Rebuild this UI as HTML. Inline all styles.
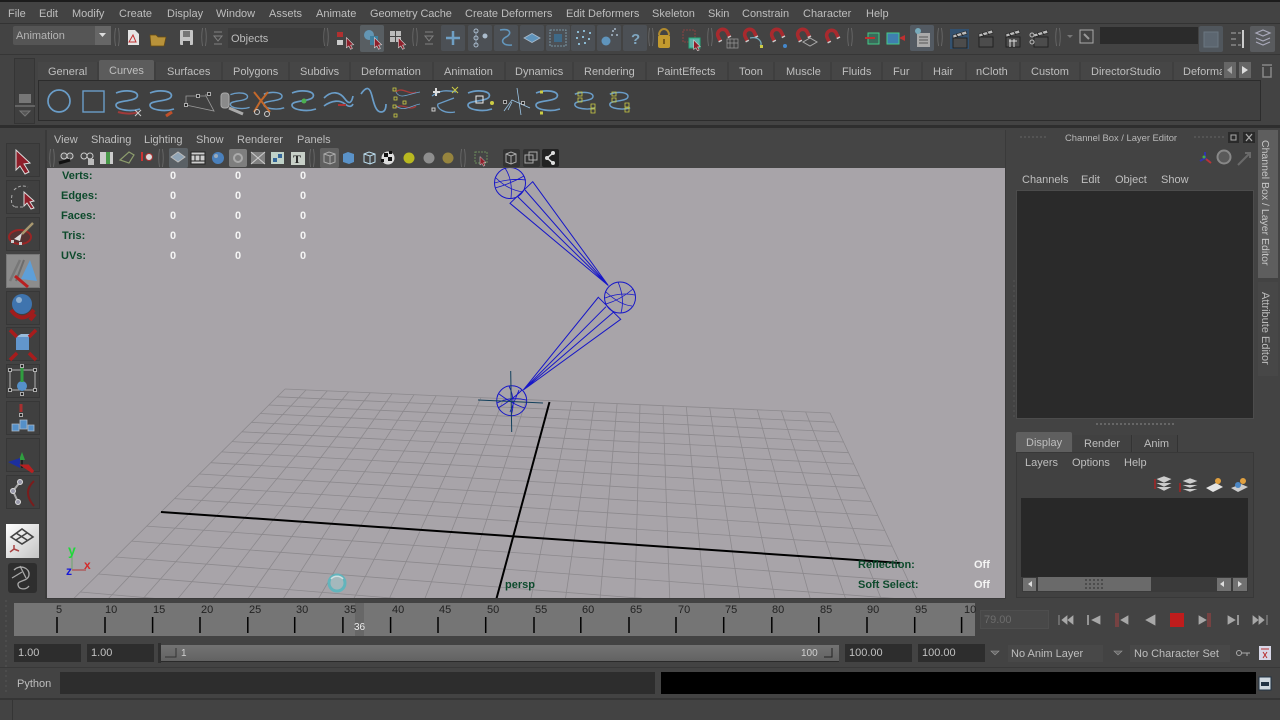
<!DOCTYPE html>
<html><head><meta charset="utf-8"><title>Maya</title>
<style>
html,body{margin:0;padding:0;background:#434343;}
body{width:1280px;height:720px;position:relative;overflow:hidden;font:11px/14px "Liberation Sans",Arial,sans-serif;color:#bebebe;}
.t{position:absolute;white-space:nowrap;margin-top:1px;}
.b{position:absolute;box-sizing:border-box;}
.h{position:absolute;white-space:nowrap;font-weight:bold;color:#0d4a2c;margin-top:1px;}
.o{position:absolute;white-space:nowrap;font-weight:bold;color:#f4f4f4;margin-top:1px;}
.f{position:absolute;box-sizing:border-box;background:#2d2d2d;height:18px;color:#c0c0c0;line-height:19px;padding-left:4px;}
.tb{position:absolute;box-sizing:border-box;left:6px;width:34px;height:34px;background:#404040;border:1px solid #373737;}
svg.o1{position:absolute;left:0;top:0;}
</style></head><body>
<!-- panel backgrounds -->
<div class="b" style="left:0;top:0;width:1280px;height:2px;background:#1c1c1c"></div>
<div class="b" style="left:0;top:23px;width:1280px;height:1px;background:#333"></div>
<div class="b" style="left:0;top:54px;width:1280px;height:1px;background:#363636"></div>
<div class="b" style="left:0;top:125px;width:1280px;height:3px;background:#2e2e2e"></div>

<!-- menu -->
<span class="t" style="left:8px;top:6px">File</span><span class="t" style="left:39px;top:6px">Edit</span><span class="t" style="left:72px;top:6px">Modify</span><span class="t" style="left:119px;top:6px">Create</span><span class="t" style="left:167px;top:6px">Display</span><span class="t" style="left:216px;top:6px">Window</span><span class="t" style="left:269px;top:6px">Assets</span><span class="t" style="left:316px;top:6px">Animate</span><span class="t" style="left:370px;top:6px;letter-spacing:-.1px">Geometry Cache</span><span class="t" style="left:465px;top:6px">Create Deformers</span><span class="t" style="left:566px;top:6px">Edit Deformers</span><span class="t" style="left:652px;top:6px">Skeleton</span><span class="t" style="left:708px;top:6px">Skin</span><span class="t" style="left:742px;top:6px">Constrain</span><span class="t" style="left:803px;top:6px">Character</span><span class="t" style="left:866px;top:6px">Help</span>

<!-- status line -->
<div class="b" style="left:13px;top:26px;width:98px;height:19px;background:#555;border-radius:2px"></div>
<div class="b" style="left:95px;top:26px;width:16px;height:19px;background:#666"></div>
<span class="t" style="left:16px;top:28px;color:#b4b4b4">Animation</span>
<div class="b" style="left:228px;top:28px;width:97px;height:20px;background:#3c3c3c"></div>
<span class="t" style="left:231px;top:31px;color:#bcbcbc">Objects</span>
<div class="b" style="left:1100px;top:27px;width:98px;height:17px;background:#2b2b2b"></div>

<!-- shelf tabs -->
<div class="b" style="left:38px;top:62px;width:1190px;height:18px;background:#464646"></div>
<div class="b" style="left:99px;top:60px;width:55px;height:20px;background:#5c5c5c;border-radius:2px 2px 0 0"></div>
<span class="t" style="left:48px;top:64px">General</span><span class="t" style="left:109px;top:63px">Curves</span><span class="t" style="left:167px;top:64px">Surfaces</span><span class="t" style="left:233px;top:64px">Polygons</span><span class="t" style="left:300px;top:64px">Subdivs</span><span class="t" style="left:361px;top:64px">Deformation</span><span class="t" style="left:444px;top:64px">Animation</span><span class="t" style="left:515px;top:64px">Dynamics</span><span class="t" style="left:584px;top:64px">Rendering</span><span class="t" style="left:657px;top:64px">PaintEffects</span><span class="t" style="left:739px;top:64px">Toon</span><span class="t" style="left:786px;top:64px">Muscle</span><span class="t" style="left:842px;top:64px">Fluids</span><span class="t" style="left:893px;top:64px">Fur</span><span class="t" style="left:933px;top:64px">Hair</span><span class="t" style="left:976px;top:64px">nCloth</span><span class="t" style="left:1031px;top:64px">Custom</span><span class="t" style="left:1091px;top:64px">DirectorStudio</span>
<div class="b" style="left:1183px;top:62px;width:39px;height:18px;overflow:hidden"><span class="t" style="left:0;top:2px">Deformation</span></div>
<div class="b" style="left:38px;top:80px;width:1223px;height:41px;background:#404040;border:1px solid #2c2c2c"></div>
<div class="b" style="left:14px;top:58px;width:21px;height:66px;background:#3f3f3f;border:1px solid #353535"></div>
<div class="b" style="left:1224px;top:62px;width:12px;height:16px;background:#666"></div>
<div class="b" style="left:1239px;top:62px;width:12px;height:16px;background:#666"></div>

<!-- viewport panel -->
<div class="b" style="left:45px;top:130px;width:961px;height:469px;background:#3a3a3a"></div>
<div class="b" style="left:47px;top:130px;width:958px;height:38px;background:#454545"></div>
<div class="b" style="left:47px;top:168px;width:958px;height:430px;background:#a8a4a9"></div>
<span class="t" style="left:54px;top:132px">View</span><span class="t" style="left:91px;top:132px">Shading</span><span class="t" style="left:144px;top:132px">Lighting</span><span class="t" style="left:196px;top:132px">Show</span><span class="t" style="left:237px;top:132px">Renderer</span><span class="t" style="left:297px;top:132px">Panels</span>

<!-- toolbox -->
<div class="tb" style="top:143px"></div><div class="tb" style="top:180px"></div><div class="tb" style="top:217px"></div>
<div class="tb" style="top:254px;background:#8c8c8c;border-color:#777"></div>
<div class="tb" style="top:291px"></div><div class="tb" style="top:327px"></div><div class="tb" style="top:364px"></div><div class="tb" style="top:401px"></div><div class="tb" style="top:438px"></div><div class="tb" style="top:475px"></div>
<div class="b" style="left:6px;top:524px;width:33px;height:34px;background:linear-gradient(135deg,#fff,#c4c4c4)"></div>
<div class="b" style="left:8px;top:563px;width:29px;height:30px;background:#2e2e2e;border-radius:3px"></div>

<!-- right panel -->
<span class="t" style="left:1065px;top:130px;font-size:9.4px;color:#b8b8b8">Channel Box / Layer Editor</span>
<span class="t" style="left:1022px;top:172px">Channels</span><span class="t" style="left:1081px;top:172px">Edit</span><span class="t" style="left:1115px;top:172px">Object</span><span class="t" style="left:1161px;top:172px">Show</span>
<div class="b" style="left:1016px;top:190px;width:238px;height:229px;background:#2a2a2a;border:1px solid #4c4c4c"></div>
<div class="b" style="left:1016px;top:452px;width:238px;height:146px;background:#414141;border:1px solid #383838"></div>
<div class="b" style="left:1016px;top:432px;width:56px;height:20px;background:#5f5f5f;border-radius:2px 2px 0 0"></div>
<div class="b" style="left:1073px;top:435px;width:59px;height:17px;background:#414141;border-right:1px solid #333"></div>
<div class="b" style="left:1133px;top:435px;width:45px;height:17px;background:#414141;border-right:1px solid #333"></div>
<span class="t" style="left:1026px;top:435px">Display</span><span class="t" style="left:1084px;top:436px">Render</span><span class="t" style="left:1144px;top:436px">Anim</span>
<span class="t" style="left:1025px;top:455px">Layers</span><span class="t" style="left:1072px;top:455px">Options</span><span class="t" style="left:1124px;top:455px">Help</span>
<div class="b" style="left:1021px;top:498px;width:227px;height:79px;background:#282828"></div>
<div class="b" style="left:1022px;top:577px;width:226px;height:15px;background:#3a3a3a"></div>
<div class="b" style="left:1023px;top:578px;width:13px;height:13px;background:#717171"></div>
<div class="b" style="left:1038px;top:577px;width:113px;height:14px;background:#6a6a6a"></div>
<div class="b" style="left:1217px;top:578px;width:14px;height:13px;background:#717171"></div>
<div class="b" style="left:1233px;top:578px;width:14px;height:13px;background:#717171"></div>
<div class="b" style="left:1258px;top:130px;width:20px;height:148px;background:#5e5e5e"></div>
<div class="b" style="left:1258px;top:282px;width:20px;height:94px;background:#474747"></div>
<span class="t" style="left:1258px;top:139px;writing-mode:vertical-rl;color:#c8c8c8;font-size:10.5px">Channel Box / Layer Editor</span>
<span class="t" style="left:1258px;top:291px;writing-mode:vertical-rl;color:#bcbcbc">Attribute Editor</span>

<!-- time slider -->
<div class="b" style="left:14px;top:603px;width:961px;height:33px;background:#757575"></div>
<div class="b" style="left:355px;top:603px;width:9px;height:33px;background:#676767"></div>
<span class="t" style="left:56px;top:602px;color:#222">5</span><span class="t" style="left:105px;top:602px;color:#222">10</span><span class="t" style="left:153px;top:602px;color:#222">15</span><span class="t" style="left:201px;top:602px;color:#222">20</span><span class="t" style="left:249px;top:602px;color:#222">25</span><span class="t" style="left:296px;top:602px;color:#222">30</span><span class="t" style="left:344px;top:602px;color:#222">35</span><span class="t" style="left:392px;top:602px;color:#222">40</span><span class="t" style="left:439px;top:602px;color:#222">45</span><span class="t" style="left:487px;top:602px;color:#222">50</span><span class="t" style="left:535px;top:602px;color:#222">55</span><span class="t" style="left:582px;top:602px;color:#222">60</span><span class="t" style="left:630px;top:602px;color:#222">65</span><span class="t" style="left:678px;top:602px;color:#222">70</span><span class="t" style="left:725px;top:602px;color:#222">75</span><span class="t" style="left:772px;top:602px;color:#222">80</span><span class="t" style="left:820px;top:602px;color:#222">85</span><span class="t" style="left:867px;top:602px;color:#222">90</span><span class="t" style="left:915px;top:602px;color:#222">95</span><span class="t" style="left:964px;top:602px;color:#222">10</span>
<span class="t" style="left:354px;top:620px;color:#eee;font-size:10px">36</span>
<div class="b" style="left:980px;top:610px;width:69px;height:19px;background:#484848;border:1px solid #4e4e4e"></div>
<span class="t" style="left:984px;top:612px;color:#6c6c6c">79.00</span>

<!-- range -->
<div class="f" style="left:14px;top:644px;width:67px">1.00</div>
<div class="f" style="left:87px;top:644px;width:67px">1.00</div>
<div class="b" style="left:158px;top:643px;width:3px;height:20px;background:#2f2f2f"></div>
<div class="b" style="left:161px;top:645px;width:678px;height:17px;background:linear-gradient(#737373,#626262);border-bottom:1px solid #2a2a2a"></div>
<span class="t" style="left:181px;top:646px;color:#d0d0d0;font-size:10px">1</span>
<span class="t" style="left:801px;top:646px;color:#d0d0d0;font-size:10px">100</span>
<div class="f" style="left:845px;top:644px;width:67px">100.00</div>
<div class="f" style="left:918px;top:644px;width:67px">100.00</div>
<div class="b" style="left:1008px;top:645px;width:95px;height:17px;background:#484848"></div>
<span class="t" style="left:1011px;top:646px">No Anim Layer</span>
<div class="b" style="left:1130px;top:645px;width:100px;height:17px;background:#484848"></div>
<span class="t" style="left:1134px;top:646px">No Character Set</span>

<!-- command line -->
<div class="b" style="left:0;top:667px;width:1280px;height:1px;background:#383838"></div>
<span class="t" style="left:17px;top:676px">Python</span>
<div class="b" style="left:60px;top:672px;width:595px;height:22px;background:#2d2d2d"></div>
<div class="b" style="left:661px;top:672px;width:595px;height:22px;background:#000"></div>
<div class="b" style="left:0;top:698px;width:1280px;height:2px;background:#353535"></div>
<div class="b" style="left:12px;top:700px;width:1px;height:20px;background:#353535"></div>

<svg class="o1" width="1280" height="720" viewBox="0 0 1280 720" fill="none">
<defs>
<clipPath id="vp"><rect x="47" y="168" width="958" height="430"/></clipPath>
<path id="sc" d="M-12,-8C-2,-12 12,-10 9,-4C6,1 -12,-1 -12,4C-12,9 3,11 12,8"/>
<g id="mag"><path d="M-7,6V-1A7,7 0 0 1 7,-1V6" stroke="#a82a2e" stroke-width="5"/><path d="M-9.500,6h5M4.500,6h5" stroke="#ccc" stroke-width="2"/></g>
<g id="clap"><rect x="-7" y="-2" width="14" height="10" fill="#4c4c4c" stroke="#222"/><path d="M-7,-5L6,-9l1,3 -14,4z" fill="#bbb" stroke="#222" stroke-width=".6"/><path d="M-4,-6l2,3M1,-7l2,3" stroke="#222"/></g>
<g id="btn"><rect x="-12" y="-13" width="24" height="26" rx="2" fill="#4c5055"/></g>
<path id="arr" d="M-6,-9L6,3 1,3.500 4,9 1,10.500 -2,5 -6,8z" fill="#8e1f2a" stroke="#d8d8d8" stroke-width="1"/>
<g id="sep"><path d="M-1.500,-9Q-3,0 -1.500,9M1.500,-9Q3,0 1.500,9" stroke="#6c6c6c" stroke-width=".8"/></g>
<g id="tri"><path d="M-4,-6h8M-4,6h8M-4,-2h8l-4,5z" stroke="#808080" stroke-width="1"/></g>
<rect id="pt" x="-1.500" y="-1.500" width="3" height="3" fill="#222" stroke="#ddd" stroke-width=".7"/>
</defs>

<!-- dropdown arrow -->
<path d="M99,33h7l-3.500,4z" fill="#ddd"/>
<!-- tab dividers -->
<path d="M98,62V80M155,62V80M222,62V80M289,62V80M350,62V80M433,62V80M505,62V80M573,62V80M646,62V80M728,62V80M774,62V80M831,62V80M882,62V80M922,62V80M966,62V80M1020,62V80M1080,62V80M1173,62V80" stroke="#383838"/>

<!-- status icons -->
<use href="#sep" x="117" y="37"/><use href="#sep" x="204" y="37"/><use href="#tri" x="218" y="38"/><use href="#sep" x="326" y="37"/><use href="#sep" x="415" y="37"/><use href="#tri" x="429" y="38"/><use href="#sep" x="651" y="37"/><use href="#sep" x="710" y="37"/><use href="#sep" x="850" y="37"/><use href="#sep" x="940" y="37"/><use href="#sep" x="1058" y="37"/>
<path d="M128,30h7l4,4v11h-11z" fill="#e4e4e4"/><path d="M129,42l4,-7 3,7z" stroke="#c03030"/>
<path d="M150,35h6l2,2h8l-2,9h-13z" fill="#b8923a" stroke="#6a4d12" stroke-width=".7"/>
<rect x="180" y="30" width="13" height="15" rx="1" fill="#c4c4c4"/><rect x="183" y="31" width="7" height="6" fill="#777"/><rect x="183" y="41" width="7" height="4" fill="#444"/>
<rect x="337" y="32" width="6" height="5" fill="#b03030"/><rect x="337" y="40" width="6" height="5" fill="#ccc"/><use href="#arr" transform="translate(350,43) scale(.6)"/>
<rect x="360" y="25" width="24" height="27" rx="2" fill="#585e62"/><circle cx="369" cy="35" r="5" fill="#6396b4"/><rect x="370" y="36" width="8" height="9" fill="#3f7f9f"/><use href="#arr" transform="translate(378,43) scale(.6)"/>
<path d="M390,31h5v5h-5zM396,31h5v5h-5zM390,37h5v5h-5zM396,37h5v5h-5z" fill="#bbb"/><use href="#arr" transform="translate(402,43) scale(.6)"/>
<g transform="translate(453,38)"><use href="#btn"/><path d="M0,-7V7M-7,0H7" stroke="#6f9fc4" stroke-width="2.500"/></g>
<g transform="translate(480,38)"><use href="#btn"/><path d="M-4,-7V7" stroke="#789" stroke-width="1"/><circle cx="-4" cy="-7" r="2" stroke="#abc"/><circle cx="-4" cy="0" r="2" stroke="#abc"/><circle cx="-4" cy="7" r="2" stroke="#abc"/><circle cx="5" cy="-2" r="2.500" fill="#abc"/></g>
<g transform="translate(506,38)"><use href="#btn"/><path d="M-6,-8C5,-10 6,-4 0,-1S-4,8 6,7" stroke="#6396bc" stroke-width="1.600"/></g>
<g transform="translate(532,38)"><use href="#btn"/><path d="M-8,0L0,-4.500 8,0 0,4.500z" fill="#5f94bc" stroke="#abc" stroke-width=".8"/></g>
<g transform="translate(558,38)"><use href="#btn"/><rect x="-8" y="-8" width="16" height="16" stroke="#8ab" stroke-dasharray="2 1" stroke-width=".8"/><path d="M-4,-4h8v8h-8z" fill="#3f6a88"/></g>
<g transform="translate(583,38)"><use href="#btn"/><path d="M-6,-6h2M0,-7h2M6,-5h2M-7,0h2M-1,-1h2M5,1h2M-5,6h2M1,5h2" stroke="#8ab8d0" stroke-width="2"/></g>
<g transform="translate(609,38)"><use href="#btn"/><circle cx="-3" cy="3" r="4.500" fill="#5f94bc"/><path d="M3,-7h2M7,-3h2M5,-9h2M2,-3h2" stroke="#abc" stroke-width="1.600"/></g>
<g transform="translate(635,38)"><use href="#btn"/><text x="-4" y="6" font-size="15" font-family="Liberation Sans" font-weight="bold" fill="#7fa6c0">?</text></g>
<path d="M659,35a5,6 0 0 1 10,0" stroke="#b08a2e" stroke-width="2"/><rect x="658" y="35" width="12" height="13" rx="2" fill="#c39a2e"/><rect x="663" y="39" width="2" height="5" fill="#7a5a1a"/>
<rect x="683" y="30" width="12" height="12" stroke="#a04040" stroke-dasharray="2 1" stroke-width=".8"/><rect x="689" y="38" width="11" height="10" fill="#5fb0a8" stroke="#2a7"/><use href="#arr" transform="translate(697,45) scale(.55)"/>
<use href="#mag" transform="translate(723,35) rotate(-25) scale(.72)"/><path d="M727,39h11v9h-11zM730,39v9M734,39v9M727,43h11" stroke="#999" stroke-width=".7"/>
<use href="#mag" transform="translate(750,35) rotate(-25) scale(.72)"/><path d="M750,38C760,36 763,44 760,46" stroke="#7ab" stroke-width="1.300"/><rect x="760" y="45" width="3" height="3" fill="#cc4"/>
<use href="#mag" transform="translate(777,35) rotate(-25) scale(.72)"/><circle cx="785" cy="46" r="2" fill="#48c"/>
<use href="#mag" transform="translate(803,35) rotate(-25) scale(.72)"/><path d="M803,42l7,-4 7,4 -7,4z" stroke="#aaa"/>
<use href="#mag" transform="translate(832,36) rotate(-25) scale(.72)"/>
<rect x="868" y="33" width="11" height="11" fill="#3a6a5a" stroke="#4c8"/><path d="M865,38h10" stroke="#c03030" stroke-width="2"/>
<rect x="887" y="33" width="12" height="11" fill="#3f7faf" stroke="#4c8"/><path d="M899,38l6,-3v6z" fill="#c03030"/>
<rect x="910" y="25" width="24" height="26" rx="2" fill="#535a62"/><rect x="917" y="33" width="13" height="14" fill="#aaa"/><path d="M919,37h9M919,40h9M919,43h9" stroke="#555"/><circle cx="918" cy="31" r="3" fill="#7ab"/>
<rect x="950" y="29" width="19" height="20" fill="#33516f"/><use href="#clap" x="960" y="40"/>
<use href="#clap" x="986" y="39"/><use href="#clap" x="1013" y="39"/><path d="M1009,41h8M1010,39v8M1014,39v8" stroke="#ddd"/><use href="#clap" x="1041" y="39"/><circle cx="1032" cy="35" r="2" stroke="#bbb"/><circle cx="1032" cy="42" r="2" stroke="#bbb"/>
<path d="M1067,35h6l-3,3z" fill="#777"/><rect x="1080" y="30" width="13" height="13" stroke="#aaa"/><path d="M1084,34l5,5" stroke="#999" stroke-width="2"/>
<rect x="1199" y="26" width="24" height="26" rx="2" fill="#50565c"/><rect x="1204" y="32" width="14" height="15" stroke="#6a7580" fill="#5c6670"/>
<path d="M1231,33h5M1231,39h5M1231,45h5M1238,33h3M1238,45h3" stroke="#aaa"/><path d="M1243,30v18" stroke="#ccc" stroke-width="2"/>
<rect x="1250" y="26" width="25" height="26" rx="2" fill="#595b5e"/><path d="M1256,33l7,-3 7,3 -7,3zM1256,38l7,3 7,-3M1256,42l7,3 7,-3" stroke="#aab" stroke-width="1.200"/>

<!-- shelf left -->
<rect x="19" y="94" width="12" height="9" fill="#777"/><path d="M15,106h20" stroke="#888"/><path d="M20,111h10l-5,5z" stroke="#777" fill="#555"/>
<!-- tab arrows/trash -->
<path d="M1232,66v8l-5,-4z" fill="#aaa"/><path d="M1242,66v8l6,-4z" fill="#ddd"/>
<path d="M1262,65h10M1263,67v10h8v-10" stroke="#888" stroke-width="1.500"/>

<!-- shelf icons -->
<g stroke="#6a9dc8" stroke-width="1.700">
<circle cx="59" cy="101" r="11"/><rect x="83" y="91" width="21" height="21" stroke-width="1.400"/>
<g transform="translate(128,101)"><use href="#sc"/></g>
<g transform="translate(162,101)"><use href="#sc"/></g>
<g transform="translate(234,101)"><use href="#sc" transform="translate(6,0) scale(.8)"/></g>
<g transform="translate(270,101)"><use href="#sc" transform="translate(4,0) scale(.85)"/></g>
<g transform="translate(304,101)"><use href="#sc"/></g>
<path d="M324,98C332,90 340,92 345,99S352,101 353,96M324,106C332,100 340,100 345,104S352,106 353,104"/>
<path d="M361,94C367,85 370,88 372,96S376,112 381,112 386,106 386,104"/>
<g transform="translate(480,101)"><use href="#sc"/></g>
<g transform="translate(548,101)"><use href="#sc"/></g>
<g transform="translate(585,101)"><use href="#sc" transform="scale(.85)"/></g>
<g transform="translate(620,101)"><use href="#sc" transform="scale(.85)"/></g>
</g>
<path d="M118,112C128,115 136,113 138,112" stroke="#a03a3a" stroke-width="2"/><path d="M135,110l6,6M141,110l-6,6" stroke="#ccc"/>
<path d="M172,112l-6,4" stroke="#c0502a" stroke-width="3"/>
<path d="M186,105V96h20M206,96v-2M186,105l28,6-8,-15" stroke="#999" stroke-width=".8"/><use href="#pt" x="186" y="105"/><use href="#pt" x="198" y="96"/><use href="#pt" x="209" y="94"/>
<rect x="221" y="93" width="8" height="15" rx="3" fill="#8a8a8a" stroke="#aaa"/><path d="M229,108l14,6" stroke="#aaa" stroke-width="3"/>
<path d="M254,92l8,10 8,10M268,92l-8,10-6,10" stroke="#c4682a" stroke-width="2"/><circle cx="257" cy="112" r="2.500" stroke="#ccc"/><circle cx="267" cy="114" r="2.500" stroke="#ccc"/>
<circle cx="304" cy="101" r="2.500" fill="#4caf50"/><path d="M338,105h8" stroke="#a33" stroke-width="2"/>
<path d="M396,92C402,86 410,96 416,92M396,108C402,102 410,112 416,106" stroke="#a83a3a" stroke-width="1.300"/><path d="M396,92C400,100 408,94 420,92M396,106C404,112 410,106 420,104" stroke="#6ea3cf" stroke-width=".8"/>
<g stroke="#cc4" stroke-width=".8"><rect x="393" y="88" width="3" height="3"/><rect x="394" y="97" width="3" height="3"/><rect x="393" y="105" width="3" height="3"/><rect x="394" y="114" width="3" height="3"/><rect x="403" y="101" width="3" height="3"/></g>
<path d="M432,96C440,90 446,90 456,92M454,98L438,104C436,108 444,114 455,112" stroke="#6a9dc8" stroke-width="1.300"/><path d="M433,92h7M436,88v8" stroke="#ddd" stroke-width="2"/><path d="M452,87l6,6M458,87l-6,6" stroke="#cc4"/><rect x="432" y="108" width="3" height="3" stroke="#ccc"/>
<rect x="476" y="96" width="7" height="7" stroke="#eee"/><circle cx="492" cy="103" r="2" fill="#cc4"/>
<path d="M504,111L512,100 530,108M517,88L521,115M512,102L508,110" stroke="#9cc7e8" stroke-width=".8"/><use href="#pt" x="505" y="102"/><use href="#pt" x="523" y="103"/>
<path d="M540,92h3M540,113h3" stroke="#cc4" stroke-width="3"/><path d="M578,92h4v4h-4zM578,98h4v4h-4zM591,104h4v4h-4zM591,109h4v4h-4z" stroke="#cc4" stroke-width=".8"/><path d="M612,92h4v4h-4zM612,98h4v4h-4zM625,103h4v4h-4zM625,108h4v4h-4z" stroke="#cc4" stroke-width=".8"/>

<!-- viewport toolbar -->
<use href="#sep" x="52" y="158"/><use href="#sep" x="161" y="158"/><use href="#sep" x="312" y="158"/><use href="#sep" x="463" y="158"/>
<circle cx="64" cy="156" r="3" stroke="#ccc" fill="#555"/><circle cx="70" cy="156" r="3" stroke="#ccc" fill="#555"/><path d="M59,163l11,-3" stroke="#111" stroke-width="3"/>
<circle cx="84" cy="156" r="3" stroke="#ccc"/><circle cx="90" cy="156" r="3" stroke="#ccc"/><rect x="88" y="159" width="6" height="6" fill="#bbb"/>
<rect x="100" y="152" width="13" height="12" fill="#ccc"/><rect x="106" y="152" width="4" height="12" fill="#4a9a4a"/>
<path d="M120,160l9,-8 5,3 -5,8z" stroke="#8c9c6c" stroke-width="1.200"/>
<circle cx="149" cy="157" r="3.500" fill="#ddd" stroke="#a33"/><path d="M142,152v9" stroke="#c33" stroke-width="2"/>
<rect x="169" y="148" width="19" height="20" rx="2" fill="#5a6065"/><path d="M171,157l7,-5 7,5-7,5z" fill="#8fa4b6" stroke="#bbb"/>
<rect x="191" y="152" width="14" height="12" fill="#ccc" stroke="#222"/><path d="M191,155h14M191,161h14M195,155v6M200,155v6" stroke="#222"/>
<circle cx="218" cy="158" r="6" fill="#4a80bc"/><circle cx="216" cy="156" r="2" fill="#9ab"/>
<rect x="229" y="149" width="18" height="18" rx="2" fill="#7e7e7e"/><circle cx="238" cy="158" r="4" stroke="#aaa" stroke-width="2"/>
<rect x="251" y="152" width="14" height="12" fill="#808080"/><path d="M251,152l14,12M265,152l-14,12" stroke="#ccc"/>
<rect x="271" y="152" width="13" height="12" fill="#bfd2c8"/><rect x="273" y="158" width="4" height="4" fill="#369"/><rect x="278" y="154" width="4" height="4" fill="#369"/>
<rect x="291" y="152" width="14" height="13" fill="#c8d0c8"/><text x="293" y="163" font-size="12" font-family="Liberation Serif" font-weight="bold" fill="#222">T</text>
<rect x="320" y="148" width="19" height="20" rx="2" fill="#606060"/><path d="M324,154l5,-2 6,2v8l-5,2-6,-2zM324,154l6,2 5,-2M330,156v8" stroke="#aaa"/>
<path d="M343,154l5,-2 6,2v8l-5,2-6,-2z" fill="#5a92c8"/><path d="M364,154l5,-2 6,2v8l-5,2-6,-2zM364,154l6,2 5,-2M370,156v8" stroke="#bde"/>
<circle cx="388" cy="158" r="6.500" fill="#ddd"/><path d="M384,153h4v4h-4zM388,157h4v4h-4zM381,159h3v3h-3zM389,151h3v3h-3z" fill="#111"/>
<circle cx="409" cy="158" r="5.500" fill="#b8b820"/><circle cx="429" cy="158" r="5.500" fill="#8e8e8e"/><circle cx="448" cy="158" r="5.500" fill="#96843e"/>
<rect x="475" y="152" width="12" height="11" stroke="#6a8a5a" stroke-dasharray="2 1"/><use href="#arr" transform="translate(483,161) scale(.5)"/>
<rect x="503" y="149" width="17" height="18" rx="2" fill="#333"/><path d="M506,154l5,-2 5,2v8l-5,2-5,-2zM506,154l5,2 5,-2M511,156v8" stroke="#aaa"/>
<rect x="523" y="149" width="17" height="18" rx="2" fill="#333"/><rect x="525" y="155" width="8" height="8" stroke="#aaa"/><rect x="529" y="152" width="8" height="8" stroke="#aaa"/>
<rect x="542" y="149" width="17" height="18" rx="2" fill="#222"/><path d="M553,153l-6,5 6,5" stroke="#ddd" stroke-width="1.500"/><circle cx="553" cy="153" r="2" fill="#ddd"/><circle cx="547" cy="158" r="2" fill="#ddd"/><circle cx="553" cy="163" r="2" fill="#ddd"/>

<!-- grid -->
<g clip-path="url(#vp)" stroke="#8c898d" stroke-width=".8">
<path d="M285,389L830,413M277.100,396.800L834.300,422.200M268.900,405L838.800,431.900M260.300,413.500L843.600,442M251.300,422.400L848.500,452.700M241.900,431.800L853.800,464M232,441.600L859.300,475.800M221.600,451.900L865.200,488.300M210.700,462.700L871.300,501.500M199.300,474L877.900,515.500M187.200,486L884.800,530.400M174.500,498.600L892.100,546.200M146.700,526.100L908.400,581M131.600,541.100L917.300,600.100M115.600,557L926.900,620.700M98.500,574L937.200,642.800M80.300,592L948.300,666.600M60.900,611.300L960.300,692.300"/>
<path d="M285,389L60.900,611.300M306.100,389.900L93.600,614.200M327.300,390.900L126.600,617.200M348.700,391.800L160.100,620.200M370.300,392.800L194.100,623.300M392.100,393.700L228.500,626.400M414,394.700L263.400,629.500M436.200,395.700L298.700,632.700M458.500,396.600L334.500,635.900M480.900,397.600L370.800,639.200M503.600,398.600L407.600,642.500M526.500,399.600L444.900,645.900M571.900,401.600L519.600,652.600M594.400,402.600L557,655.900M617.100,403.600L594.800,659.400M640,404.600L633.100,662.800M663,405.700L672.100,666.300M686.300,406.700L711.500,669.900M709.700,407.700L751.500,673.500M733.400,408.700L792.200,677.200M757.300,409.800L833.300,680.800M781.300,410.800L875,684.600M805.600,411.900L917.400,688.400M830,413L960.300,692.300"/>
<path d="M161,512L900,563M549.500,402L482.800,649.300" stroke="#000" stroke-width="2"/>
</g>

<!-- bones -->
<g clip-path="url(#vp)" stroke="#1616c8" stroke-width="1">
<circle cx="510" cy="183" r="15.500"/><path d="M494.500,183Q510,178 526,180M505,168Q513,180 511,198M495,188Q510,184 524,176M496,178Q508,190 523,192" stroke-width=".8"/>
<path d="M532.700,181.700L510,203.300 608.300,285.500zM532.700,181.700L608.300,285.500M518,197L608.300,285.500M525,190L608.300,285.500"/>
<circle cx="620" cy="297.500" r="15.500"/><path d="M605,298Q620,292 635,295M618,282Q625,298 621,313M606,304Q620,300 633,289M606,292Q620,305 632,306" stroke-width=".8"/>
<path d="M598.300,297.300L620.700,319.300 523.300,390zM598.300,297.300L523.300,390M606,306.700L523.300,390M614,311.700L523.300,390"/>
<circle cx="511.700" cy="400.700" r="15"/><path d="M497,403Q511,396 526,400M509,386Q516,400 511,416M499,394Q514,405 525,408M498,408Q512,400 522,390M519,390L510,412" stroke-width=".9"/>
</g>
<path d="M478,400L543,403M510.700,371L511.700,432" stroke="#12405c" stroke-width="1"/>

<!-- axes -->
<path d="M72,570H86" stroke="#b03838"/><path d="M72,556V569" stroke="#6aa86a"/>
<text x="68" y="555" font-size="14" font-weight="bold" font-family="Liberation Sans" fill="#1fd83a">y</text>
<text x="84" y="569" font-size="12" font-weight="bold" font-family="Liberation Sans" fill="#d42a2a">x</text>
<text x="66" y="575" font-size="12" font-weight="bold" font-family="Liberation Sans" fill="#1616d8">z</text>

<!-- spinner -->
<circle cx="337" cy="583" r="8" stroke="#62b4bc" stroke-width="3" fill="#a4b8bc"/><path d="M331,579a8,8 0 0 1 12,0" stroke="#cfe0e2" stroke-width="1.500"/>

<!-- toolbox icons -->
<path d="M16,150L30,163 24,164 29,172 25,174 20,166 16,170z" fill="#8e1f2a" stroke="#ddd" stroke-width="1"/>
<path d="M14,190Q20,184 28,187M12,195Q10,205 15,207M15,207h8" stroke="#aaa" stroke-dasharray="3 2"/><path d="M24,192L34,201 30,202 34,208 31,209 27,203 24,206z" fill="#8e1f2a" stroke="#ddd" stroke-width="1"/>
<ellipse cx="20" cy="237" rx="11" ry="7" stroke="#9a2525" stroke-width="2" fill="#533"/><path d="M33,223L22,234" stroke="#a89870" stroke-width="2.500"/><path d="M22,233l-8,6 6,2z" fill="#ddd"/><rect x="11" y="240" width="3" height="3" fill="#ccc"/><rect x="19" y="242" width="3" height="3" fill="#ccc"/>
<path d="M21,279L30,260 37,281z" fill="#5e9fd8"/><path d="M10,281L20,260" stroke="#777" stroke-width="2.500"/><path d="M16,281L24,260" stroke="#6c6c6c" stroke-width="2"/><path d="M15,276L28,287" stroke="#b82020" stroke-width="3"/>
<circle cx="22" cy="304" r="10" fill="#3f74ae"/><circle cx="19" cy="300" r="3" fill="#8fb0d0"/><path d="M11,310Q22,325 34,310M30,320l5,-6" stroke="#a01c1c" stroke-width="4"/>
<rect x="16" y="337" width="13" height="13" fill="#6296cc"/><path d="M16,337l5,-3h13l-5,3z" fill="#98bcdc"/><path d="M10,330l7,7M36,330l-7,7M10,360l7,-7M36,360l-7,-7" stroke="#a81c1c" stroke-width="3.500"/>
<rect x="10" y="370" width="25" height="20" stroke="#ccc" stroke-width=".8"/><circle cx="22" cy="386" r="5" fill="#5590c8"/><path d="M22,368v14" stroke="#2f9e3f" stroke-width="3"/><use href="#pt" x="10" y="370"/><use href="#pt" x="35" y="370"/><use href="#pt" x="10" y="390"/><use href="#pt" x="35" y="390"/><use href="#pt" x="22" y="366"/><use href="#pt" x="22" y="394"/>
<path d="M12,424h7v7h-7zM20,420h7v9h-7zM28,425h6v6h-6z" fill="#5590c8" stroke="#abc" stroke-width=".8"/><path d="M21,404v8" stroke="#a83030" stroke-width="3"/><use href="#pt" x="21" y="415"/>
<path d="M22,452l-3,8h6z" fill="#2f9e3f"/><path d="M22,460v8" stroke="#222" stroke-width="2"/><path d="M8,462L20,458V468z" fill="#1c2f9e"/><path d="M24,466L33,472 28,466z" stroke="#b82020" stroke-width="3"/>
<path d="M20,482L13,491 18,502" stroke="#aaa" stroke-width="2"/><circle cx="20" cy="482" r="2.500" fill="#99a" stroke="#ddd"/><circle cx="13" cy="491" r="2.500" fill="#99a" stroke="#ddd"/><circle cx="18" cy="502" r="2.500" fill="#99a" stroke="#ddd"/><path d="M34,481Q22,492 34,506" stroke="#7a1c1c" stroke-width="2"/>
<path d="M11,537l11,-8 11,8 -11,7zM16,533l11,7M27,533l-11,7" stroke="#444" stroke-width="1.600"/><path d="M14,549v-4M14,549l-4,3M14,549l5,2" stroke="#a44" stroke-width="1.500"/>
<path d="M14,570C20,564 30,568 29,575S17,580 18,585 26,590 29,586M20,566L26,578M12,578L22,572" stroke="#a8a8a8" stroke-width="1.300"/>

<!-- right panel icons -->
<path d="M1205,158l-5,3M1205,158v-6M1205,158l5,4" stroke="#33a" stroke-width="2"/><circle cx="1204" cy="157" r="1.500" fill="#4a4"/><path d="M1206,159l5,4" stroke="#b33" stroke-width="2"/>
<circle cx="1224" cy="157" r="6.500" stroke="#888" stroke-width="2" fill="#5a5a5a"/>
<path d="M1238,165l12,-12M1245,153h5v5" stroke="#6a6a6a" stroke-width="2"/>
<rect x="1228" y="132" width="11" height="11" fill="#2a2a2a"/><rect x="1231" y="135" width="5" height="5" stroke="#aaa"/>
<rect x="1243" y="132" width="12" height="11" fill="#2a2a2a"/><path d="M1246,134l6,7M1252,134l-6,7" stroke="#aaa" stroke-width="1.300"/>
<path d="M1020,137h28M1194,137h30" stroke="#666" stroke-dasharray="2 2"/><path d="M1096,424h78" stroke="#666" stroke-width="2" stroke-dasharray="2 2"/>
<path d="M1156,479l8,4 8,-4-8,-3zM1156,483l8,4 8,-4M1156,487l8,4 8,-4" fill="#ccc" stroke="#444" stroke-width=".5"/><path d="M1155,479v10" stroke="#b02020" stroke-width="1.400"/>
<path d="M1182,481l8,-3 8,3-8,3zM1182,485l8,3 8,-3M1182,489l8,3 8,-3" fill="#ccc" stroke="#444" stroke-width=".5"/><path d="M1180,483v9" stroke="#b02020" stroke-width="1.400"/>
<path d="M1206,488l10,-5 7,4-10,5z" fill="#e4e4e4"/><circle cx="1218" cy="481" r="3" fill="#e0a040"/>
<path d="M1231,488l10,-4 7,3-10,5z" fill="#ccc"/><circle cx="1238" cy="485" r="3" fill="#4a86c4"/><circle cx="1243" cy="481" r="3" fill="#e0a040"/>
<path d="M1032,581v6l-4,-3zM1224,581v6l-4,-3zM1238,581v6l4,-3z" fill="#ddd"/>
<g fill="#4c4c4c"><rect x="1085" y="579" width="2" height="2"/><rect x="1089" y="579" width="2" height="2"/><rect x="1093" y="579" width="2" height="2"/><rect x="1097" y="579" width="2" height="2"/><rect x="1101" y="579" width="2" height="2"/><rect x="1085" y="583" width="2" height="2"/><rect x="1089" y="583" width="2" height="2"/><rect x="1093" y="583" width="2" height="2"/><rect x="1097" y="583" width="2" height="2"/><rect x="1101" y="583" width="2" height="2"/><rect x="1085" y="587" width="2" height="2"/><rect x="1089" y="587" width="2" height="2"/><rect x="1093" y="587" width="2" height="2"/><rect x="1097" y="587" width="2" height="2"/><rect x="1101" y="587" width="2" height="2"/></g>

<!-- time ticks -->
<path d="M57,617V633M105,617V633M152.600,617V633M200,617V633M247.800,617V633M294.700,617V633M342.900,617V633M390.600,617V633M438,617V633M485.700,617V633M534,617V633M580.800,617V633M629,617V633M676,617V633M723.700,617V633M771.800,617V633M818.800,617V633M867,617V633M914.700,617V633M961.600,617V633" stroke="#000" stroke-width="1.500"/>

<!-- transport -->
<g fill="#a8a8a8" stroke="#a8a8a8" stroke-width=".8">
<path d="M1059,615v10"/><path d="M1067,616v8l-5,-4zM1073,616v8l-5,-4z"/>
<path d="M1088,615v10" stroke-width="1.600"/><path d="M1100,616v8l-8,-4z"/>
<path d="M1128,616v8l-7,-4z"/><path d="M1155,615v10l-9,-5z"/>
<path d="M1199,616v8l7,-4z"/><path d="M1228,616v8l7,-4z"/><path d="M1238,615v10" stroke-width="1.600"/>
<path d="M1253,616v8l5,-4zM1259,616v8l5,-4zM1267,615v10"/>
</g>
<path d="M1116,613v14M1118,613v14M1208,613v14M1210,613v14" stroke="#a84040"/>
<rect x="1170" y="613" width="14" height="14" fill="#c01c1c"/>

<!-- range handles/drops -->
<path d="M165,657h11v-9" stroke="#333"/>
<path d="M832,648v9h-8" stroke="#222"/>
<path d="M991,651h8l-4,4z" fill="#666" stroke="#999" stroke-width=".6"/><path d="M1114,651h8l-4,4z" fill="#666" stroke="#999" stroke-width=".6"/>
<circle cx="1239" cy="653" r="2.500" stroke="#aaa"/><path d="M1242,653h8M1247,653v3" stroke="#aaa"/>
<rect x="1259" y="646" width="12" height="14" fill="#d8d8e8"/><path d="M1261,649h8M1263,652l4,6M1267,652l-4,6" stroke="#b83030"/>
<rect x="1259" y="677" width="12" height="13" fill="#cfd8df" stroke="#234"/><rect x="1261" y="682" width="8" height="4" fill="#234"/>
<path d="M6,600v95" stroke="#555" stroke-dasharray="2 3"/><path d="M1014,280v140" stroke="#555" stroke-dasharray="2 3"/>
</svg>

<!-- HUD -->
<span class="h" style="left:62px;top:168px">Verts:</span><span class="h" style="left:61px;top:188px">Edges:</span><span class="h" style="left:61px;top:208px">Faces:</span><span class="h" style="left:62px;top:228px">Tris:</span><span class="h" style="left:61px;top:248px">UVs:</span>
<span class="o" style="left:170px;top:168px">0</span><span class="o" style="left:235px;top:168px">0</span><span class="o" style="left:300px;top:168px">0</span>
<span class="o" style="left:170px;top:188px">0</span><span class="o" style="left:235px;top:188px">0</span><span class="o" style="left:300px;top:188px">0</span>
<span class="o" style="left:170px;top:208px">0</span><span class="o" style="left:235px;top:208px">0</span><span class="o" style="left:300px;top:208px">0</span>
<span class="o" style="left:170px;top:228px">0</span><span class="o" style="left:235px;top:228px">0</span><span class="o" style="left:300px;top:228px">0</span>
<span class="o" style="left:170px;top:248px">0</span><span class="o" style="left:235px;top:248px">0</span><span class="o" style="left:300px;top:248px">0</span>
<span class="h" style="left:858px;top:557px">Reflection:</span><span class="o" style="left:974px;top:557px">Off</span>
<span class="h" style="left:858px;top:577px">Soft Select:</span><span class="o" style="left:974px;top:577px">Off</span>
<span class="h" style="left:505px;top:577px">persp</span>
</body></html>
